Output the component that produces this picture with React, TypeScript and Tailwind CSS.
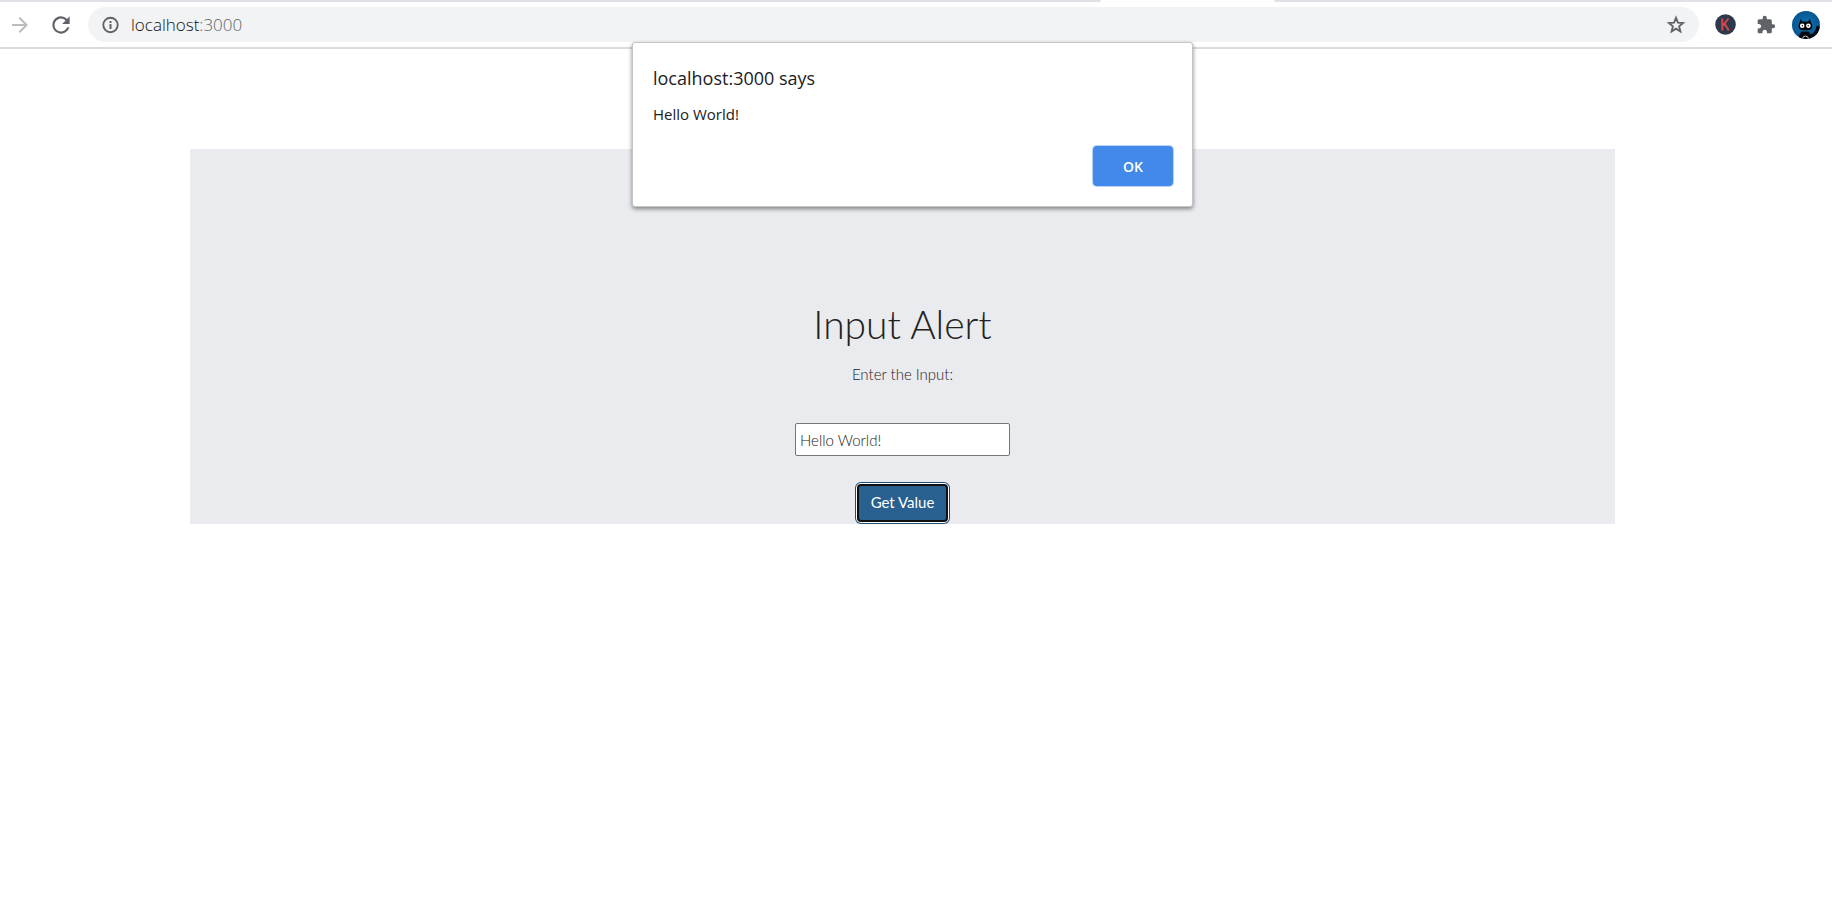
import React, { useState } from "react";
import { MdArrowForward, MdExtension } from "react-icons/md";

function Toolbar() {
  return (
    <header className="border-b-2 border-[#dadce0] bg-white font-['Open_Sans',sans-serif]">
      <div className="flex h-[2px] overflow-hidden">
        <div className="w-[1101px] rounded-br-[2px] bg-[#dee1e6]" />
        <div className="w-[173px]" />
        <div className="flex-1 rounded-bl-[2px] bg-[#dee1e6]" />
      </div>
      <div className="flex h-[45px] items-center pl-2 pr-3">
        <button aria-label="Forward" className="text-[#babcbe]">
          <MdArrowForward size={24} />
        </button>
        <button aria-label="Reload" className="ml-4 text-[#5f6368]">
          <svg width="26" height="26" viewBox="0 0 24 24" fill="currentColor">
            <path d="M17.65 6.35A7.96 7.96 0 0 0 12 4a8 8 0 1 0 7.73 10h-2.08A6 6 0 1 1 12 6c1.66 0 3.14.69 4.22 1.78L13 11h7V4z" />
          </svg>
        </button>
        <div className="ml-[14px] flex h-[35px] flex-1 items-center rounded-full bg-[#f1f3f4] px-3 text-[#5f6368]">
          <svg width="20" height="20" viewBox="0 0 20 20" aria-hidden="true">
            <circle cx="10.500" cy="10" r="7.200" fill="none" stroke="currentColor" strokeWidth="1.900" />
            <path d="M9.500 9h2v5h-2zM9.500 6h2v2h-2z" fill="currentColor" />
          </svg>
          <span className="ml-[11px] text-[17px] font-light leading-6 text-[#5f6368]">
            <span className="text-[#111215]">localhost</span>:3000
          </span>
          <button aria-label="Bookmark this page" className="ml-auto">
            <svg width="22" height="22" viewBox="0 0 24 24" fill="none" stroke="currentColor" strokeWidth="2">
              <path d="m12 4.200 2.100 5.300 5.600.4-4.300 3.600 1.400 5.500L12 16l-4.800 3 1.400-5.500-4.300-3.600 5.600-.4z" />
            </svg>
          </button>
        </div>
        <button aria-label="K extension" className="ml-4">
          <svg width="21" height="21" viewBox="0 0 21 21">
            <circle cx="10.500" cy="10.500" r="10.300" fill="#2c3a4b" />
            <path d="M7.300 4.500v12M13.500 4.500 8 11.500M9.500 9.700l4.300 6.800" stroke="#d9474c" strokeWidth="1.900" fill="none" />
          </svg>
        </button>
        <button aria-label="Extensions" className="ml-5 text-[#5f6368]">
          <MdExtension size={20} />
        </button>
        <button aria-label="Profile" className="ml-4">
          <svg width="28" height="28" viewBox="0 0 28 28">
            <defs>
              <radialGradient id="sky">
                <stop offset="0" stopColor="#0c76b8" />
                <stop offset="1" stopColor="#07568f" />
              </radialGradient>
              <clipPath id="disc">
                <circle cx="14" cy="14" r="14" />
              </clipPath>
            </defs>
            <g clipPath="url(#disc)">
              <rect width="28" height="28" fill="url(#sky)" />
              <path d="M7.500 11.500 8.500 8l2 2.500h5.500L18 8l1 3.500q1.500 2 1.200 4.500-.4 3-3.700 3.300h-6Q7 19 6.500 16q-.2-2.500 1-4.500z" fill="#05080c" />
              <path d="M9.500 20.500h7.500l1.500 3q5.500-2 6-8.500h3v4q-2 6-8 7.500l-.5 2H6.500q0-5 3-8z" fill="#05080c" />
              <circle cx="10.200" cy="14.800" r="2.300" fill="#fff" />
              <circle cx="16.400" cy="14.800" r="2.300" fill="#fff" />
              <circle cx="10.400" cy="14.800" r=".7" />
              <circle cx="16.200" cy="14.800" r=".7" />
              <path d="M10.500 28q.3-3 3-3t3 3" fill="none" stroke="#ccc" />
            </g>
          </svg>
        </button>
      </div>
    </header>
  );
}

function AlertDialog({ message, onClose }: { message: string; onClose: () => void }) {
  return (
    <div
      role="alertdialog"
      aria-labelledby="alert-title"
      aria-describedby="alert-message"
      className="absolute left-[632px] top-[42px] w-[561px] rounded-[3px] border border-[#c4c5c8] bg-white pb-5 pl-5 pr-[19px] pt-[23px] font-['Open_Sans',sans-serif] text-[#202124] shadow-[0_2px_4px_rgba(0,0,0,0.45)]"
    >
      <h2 id="alert-title" className="text-[18px] leading-6">localhost:3000 says</h2>
      <p id="alert-message" className="mt-3 text-[15px] leading-6">{message}</p>
      <div className="mt-5 flex justify-end">
        <button
          onClick={onClose}
          className="h-10 w-20 rounded-[4px] bg-[#4289ea] text-[14px] font-semibold text-white ring-1 ring-[#b9d3f8]"
        >
          OK
        </button>
      </div>
    </div>
  );
}

export default function App() {
  const [value, setValue] = useState("Hello World!");
  const [open, setOpen] = useState(true);
  return (
    <div className="relative min-h-screen bg-white">
      <Toolbar />
      <main className="pl-[190px] pr-[217px] pt-[100px] font-['Lato',sans-serif] font-light text-[#222]">
        <section className="flex flex-col items-center bg-[#eaebef] pb-[2px] pt-[150px]">
          <h1 className="text-[39px] leading-[50px]">Input Alert</h1>
          <label htmlFor="value" className="mt-[13px] text-[15px] leading-6">Enter the Input:</label>
          <input
            id="value"
            value={value}
            onChange={(e) => setValue(e.target.value)}
            className="mt-[37px] h-[33px] w-[215px] rounded-[2px] border border-[#767676] bg-white px-1 text-[15px]"
          />
          <button
            onClick={() => setOpen(true)}
            className="mt-7 h-[38px] rounded-[4px] border-2 border-[#101010] bg-[#286090] px-3 pb-px text-[15px] font-normal text-white shadow-[0_0_0_1px_#fff,0_0_0_2px_#204d74]"
          >
            Get Value
          </button>
        </section>
      </main>
      {open && <AlertDialog message={value} onClose={() => setOpen(false)} />}
    </div>
  );
}
